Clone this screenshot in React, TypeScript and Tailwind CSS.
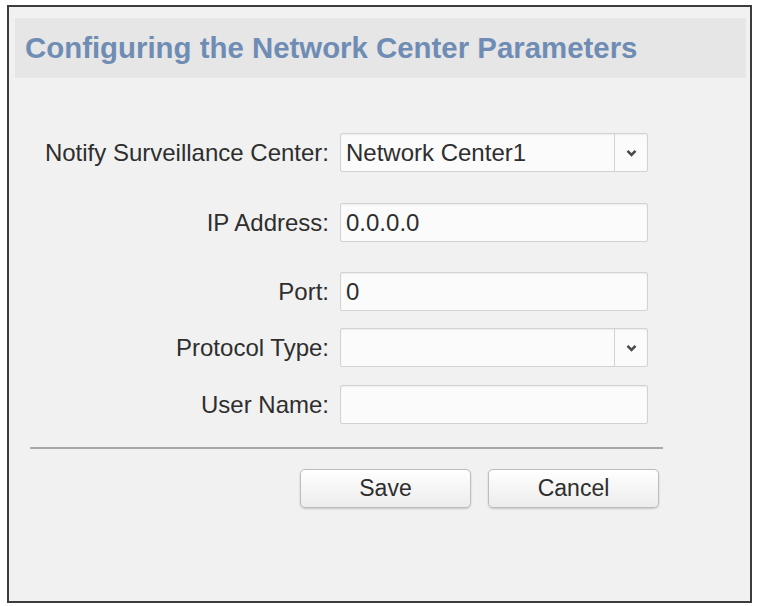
// Network center parameters dialog: one header band, a right-aligned label
// column, inputs/selects, a rule and the Save / Cancel pair.

type Field = {
  label: string
  value: string
  kind: 'text' | 'select'
  gap: string
}

const FIELDS: Field[] = [
  { label: 'Notify Surveillance Center:', value: 'Network Center1', kind: 'select', gap: 'mt-[55px]' },
  { label: 'IP Address:', value: '0.0.0.0', kind: 'text', gap: 'mt-[31px]' },
  { label: 'Port:', value: '0', kind: 'text', gap: 'mt-[30px]' },
  { label: 'Protocol Type:', value: '', kind: 'select', gap: 'mt-[17px]' },
  { label: 'User Name:', value: '', kind: 'text', gap: 'mt-[18px]' },
]

function Chevron() {
  return (
    <svg width="11" height="8" viewBox="0 0 11 8" aria-hidden>
      <path d="M1.5 1.8 L5.5 5.8 L9.5 1.8" fill="none" stroke="#4a4a4a" strokeWidth="2.6" />
    </svg>
  )
}

function FieldRow({ field }: { field: Field }) {
  return (
    <div className={`flex items-center ${field.gap}`}>
      <label className="w-[321px] pr-[1px] text-right text-[24px] leading-none text-[#2e2e2e]">
        {field.label}
      </label>
      <div className="ml-[10px] flex h-[39px] w-[308px] items-stretch rounded-[2px] border border-[#d2d2d2] bg-[#fbfbfb] shadow-[inset_0_1px_2px_rgba(0,0,0,0.06)]">
        <div className="flex flex-1 items-center px-[5px] text-[24px] text-[#2e2e2e]">
          {field.value}
        </div>
        {field.kind === 'select' ? (
          <div className="flex w-[33px] items-center justify-center border-l border-[#d2d2d2]">
            <Chevron />
          </div>
        ) : null}
      </div>
    </div>
  )
}

function DialogButton({ children }: { children: string }) {
  return (
    <button
      type="button"
      className="h-[39px] w-[171px] rounded-[5px] border border-[#bdbdbd] bg-gradient-to-b from-white to-[#ececec] text-[23px] text-[#2e2e2e] shadow-[0_1px_2px_rgba(0,0,0,0.18)]"
    >
      {children}
    </button>
  )
}

export default function App() {
  return (
    <div className="min-h-screen bg-white pl-[7px] pt-[5px] font-['Liberation_Sans',Arial,sans-serif]">
      <div className="flex h-[598px] w-[745px] flex-col border-2 border-[#3c3c3c] bg-[#f1f1f1] pl-[6px] pr-[4px] pt-[11px]">
        <div className="flex h-[60px] items-center bg-[#e6e6e6] pl-[10px]">
          <h1 className="text-[29.4px] font-bold leading-none text-[#6f8db4]">
            Configuring the Network Center Parameters
          </h1>
        </div>

        <div className="-ml-[6px] flex flex-col">
          {FIELDS.map((f) => (
            <FieldRow key={f.label} field={f} />
          ))}
        </div>

        <div className="ml-[15px] mt-[23px] h-[2px] w-[633px] bg-[#a8a8a8]" />

        <div className="ml-[285px] mt-[20px] flex gap-[17px]">
          <DialogButton>Save</DialogButton>
          <DialogButton>Cancel</DialogButton>
        </div>
      </div>
    </div>
  )
}
